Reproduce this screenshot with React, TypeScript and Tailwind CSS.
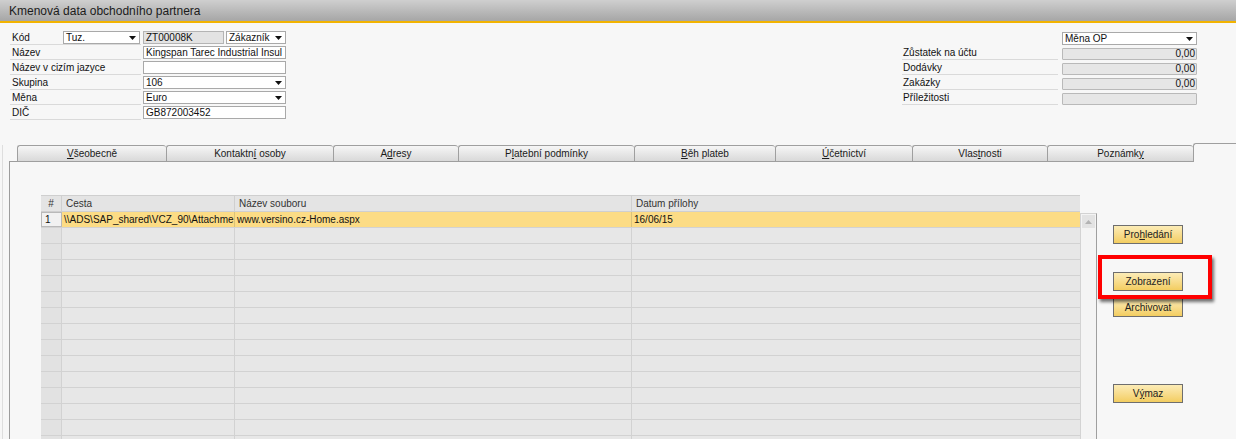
import React from 'react';

const ROWS = 15;

function Arrow() {
    return (
        <svg width="7" height="4" viewBox="0 0 7 4" className="shrink-0">
            <path d="M0 0h7L3.5 4z" fill="#111" />
        </svg>
    );
}

function Select({ value, className }: { value: string; className: string }) {
    return (
        <div className={`flex items-center justify-between border border-[#a9a9a9] bg-white pl-[2px] pr-[3px] h-[13px] leading-[11px] ${className}`}>
            <span>{value}</span>
            <Arrow />
        </div>
    );
}

function Field({ value = '', className = '' }: { value?: string; className?: string }) {
    return (
        <div className={`border border-[#a9a9a9] bg-white pl-[2px] h-[13px] leading-[11px] whitespace-nowrap overflow-hidden ${className}`}>
            {value}
        </div>
    );
}

function LeftRow({ label, children }: { label: React.ReactNode; children: React.ReactNode }) {
    return (
        <div className="flex h-[15px]">
            <div className="w-[131px] h-[14px] border-b border-[#dadada] flex items-center pl-[2px]">{label}</div>
            <div className="ml-[2px] flex gap-[2px]">{children}</div>
        </div>
    );
}

function RightRow({ label, value }: { label: string; value?: string }) {
    return (
        <div className="flex h-[15px]">
            <div className="w-[156px] h-[14px] border-b border-[#dadada] flex items-center pl-[1px]">{label}</div>
            <div className="ml-[4px] mt-[2px] w-[135px] h-[12px] border border-[#b9b9b9] rounded-[1px] bg-[#e6e6e6] text-right pr-[1px] leading-[10px]">
                {value}
            </div>
        </div>
    );
}

const tabs: { w: string; label: React.ReactNode }[] = [
    { w: 'w-[149px]', label: <><u>V</u>šeobecně</> },
    { w: 'w-[167px]', label: <>Kontaktn<u>í</u> osoby</> },
    { w: 'w-[125px]', label: <>A<u>d</u>resy</> },
    { w: 'w-[176px]', label: <>P<u>l</u>atební podmínky</> },
    { w: 'w-[141px]', label: <><u>B</u>ěh plateb</> },
    { w: 'w-[137px]', label: <><u>Ú</u>četnictví</> },
    { w: 'w-[135px]', label: <>Vlas<u>t</u>nosti</> },
    { w: 'w-[146px]', label: <>Poznámk<u>y</u></> },
];

function Button({ children, className = '' }: { children: React.ReactNode; className?: string }) {
    return (
        <div className={`w-[70px] h-[19px] border border-[#6e6e6e] bg-linear-to-b from-[#fcecb6] to-[#f3cd5f] flex items-center justify-center text-[#222] ${className}`}>
            {children}
        </div>
    );
}

export default function App() {
    return (
        <div className="relative w-[1236px] h-[439px] overflow-hidden bg-[#f7f7f7] font-['Liberation_Sans','Arial',sans-serif] text-[10px] text-[#111]">
            {/* Title */}
            <div className="h-[21px] bg-linear-to-b from-[#cfcfcf] to-[#a6a6a6] pl-[9px] text-[12px] leading-[22px] text-[#1b1b1b]">
                Kmenová data obchodního partnera
            </div>
            <div className="h-[2px] bg-[#f2b300]" />

            {/* Header form */}
            <div className="flex h-[122px]">
                <div className="pt-[8px] pl-[10px]">
                    <LeftRow
                        label={
                            <div className="flex items-center w-full">
                                <span className="w-[51px]">Kód</span>
                                <Select value="Tuz." className="w-[77px]" />
                            </div>
                        }
                    >
                        <div className="w-[81px] h-[13px] border border-[#b4b4b4] bg-[#e3e3e3] pl-[2px] leading-[11px]">ZT00008K</div>
                        <Select value="Zákazník" className="w-[60px]" />
                    </LeftRow>
                    <LeftRow label="Název">
                        <Field value="Kingspan Tarec Industrial Insul" className="w-[143px]" />
                    </LeftRow>
                    <LeftRow label="Název v cizím jazyce">
                        <Field className="w-[143px]" />
                    </LeftRow>
                    <LeftRow label="Skupina">
                        <Select value="106" className="w-[143px]" />
                    </LeftRow>
                    <LeftRow label="Měna">
                        <Select value="Euro" className="w-[143px]" />
                    </LeftRow>
                    <LeftRow label="DIČ">
                        <Field value="GB872003452" className="w-[143px]" />
                    </LeftRow>
                </div>

                <div className="ml-auto pr-[39px] pt-[9px]">
                    <div className="flex h-[14px]">
                        <Select value="Měna OP" className="ml-[160px] w-[135px]" />
                    </div>
                    <RightRow label="Zůstatek na účtu" value="0,00" />
                    <RightRow label="Dodávky" value="0,00" />
                    <RightRow label="Zakázky" value="0,00" />
                    <RightRow label="Příležitosti" />
                </div>
            </div>

            {/* Tabs + panel */}
            <div className="ml-[2px] border-l border-[#dedede] h-[294px] flex flex-col">
                <div className="ml-[6px] flex items-end h-[17px] shrink-0">
                    <div className="w-[8px] h-full border-b border-[#9c9c9c]" />
                    {tabs.map((t, i) => (
                        <div
                            key={i}
                            className={`${t.w} h-[17px] border-t border-l border-b border-[#9f9f9f] rounded-t-[3px] bg-linear-to-b from-[#f6f6f6] to-[#d9d9d9] flex items-center justify-center text-[#1a1a1a] leading-none`}
                        >
                            <span>{t.label}</span>
                        </div>
                    ))}
                    <div className="flex-1 h-[19px] border-t border-l border-[#9f9f9f] rounded-tl-[3px] bg-[#f7f7f7]" />
                </div>

                <div className="ml-[6px] flex-1 border-l border-[#9c9c9c] flex pt-[33px] pl-[31px]">
                    {/* Grid */}
                    <div className="w-[1039px] flex flex-col">
                        <div className="grid grid-cols-[21px_173px_397px_448px] h-[17px] border-t border-b border-[#cfcfcf] bg-[#e4e4e4] text-[#333]">
                            <div className="border-r border-[#cfcfcf] text-center leading-[16px]">#</div>
                            <div className="border-r border-[#cfcfcf] pl-[4px] leading-[16px]">Cesta</div>
                            <div className="border-r border-[#cfcfcf] pl-[4px] leading-[16px]">Název souboru</div>
                            <div className="pl-[4px] leading-[16px]">Datum přílohy</div>
                        </div>
                        <div className="grid grid-cols-[21px_173px_397px_448px] h-[16px] border-b border-[#d2d2d2] bg-[#fcdc85]">
                            <div className="border border-[#b9b9b9] bg-[#f1f1f1] pl-[3px] leading-[13px]">1</div>
                            <div className="border-r border-[#d9c27a] pl-[2px] leading-[15px] whitespace-nowrap">\\ADS\SAP_shared\VCZ_90\Attachme</div>
                            <div className="border-r border-[#d9c27a] pl-[2px] leading-[15px]">www.versino.cz-Home.aspx</div>
                            <div className="pl-[2px] leading-[15px]">16/06/15</div>
                        </div>
                        {Array.from({ length: ROWS }).map((_, i) => (
                            <div key={i} className="grid grid-cols-[21px_173px_397px_448px] h-[16px] shrink-0 border-b border-[#d2d2d2] bg-[#e7e7e7]">
                                <div className="border-r border-[#d2d2d2] bg-[#e2e2e2]" />
                                <div className="border-r border-[#d2d2d2]" />
                                <div className="border-r border-[#d2d2d2]" />
                                <div />
                            </div>
                        ))}
                    </div>

                    {/* Scrollbar */}
                    <div className="w-[17px] mt-[18px] border-t border-l border-[#d3d3d3] border-r-[#9f9f9f] border-r bg-[#f4f4f4]">
                        <div className="mx-[1px] mt-[1px] h-[13px] bg-[#e3e3e3] flex items-center justify-center">
                            <svg width="7" height="4" viewBox="0 0 7 4">
                                <path d="M0 4h7L3.5 0z" fill="#b3b3b3" />
                            </svg>
                        </div>
                    </div>

                    {/* Buttons */}
                    <div className="ml-[16px] flex flex-col">
                        <Button className="mt-[30px]">Pro<u>h</u>ledání</Button>
                        <Button className="mt-[28px]">Zobrazení</Button>
                        <Button className="mt-[7px]">Archivovat</Button>
                        <Button className="mt-[67px]">V<u>ý</u>maz</Button>
                    </div>
                </div>
            </div>

            {/* Annotation */}
            <div className="absolute left-[1098px] top-[255px] w-[114px] h-[44px] border-4 border-[#ff0000] shadow-[2px_3px_3px_rgba(0,0,0,0.55)]" />
        </div>
    );
}
